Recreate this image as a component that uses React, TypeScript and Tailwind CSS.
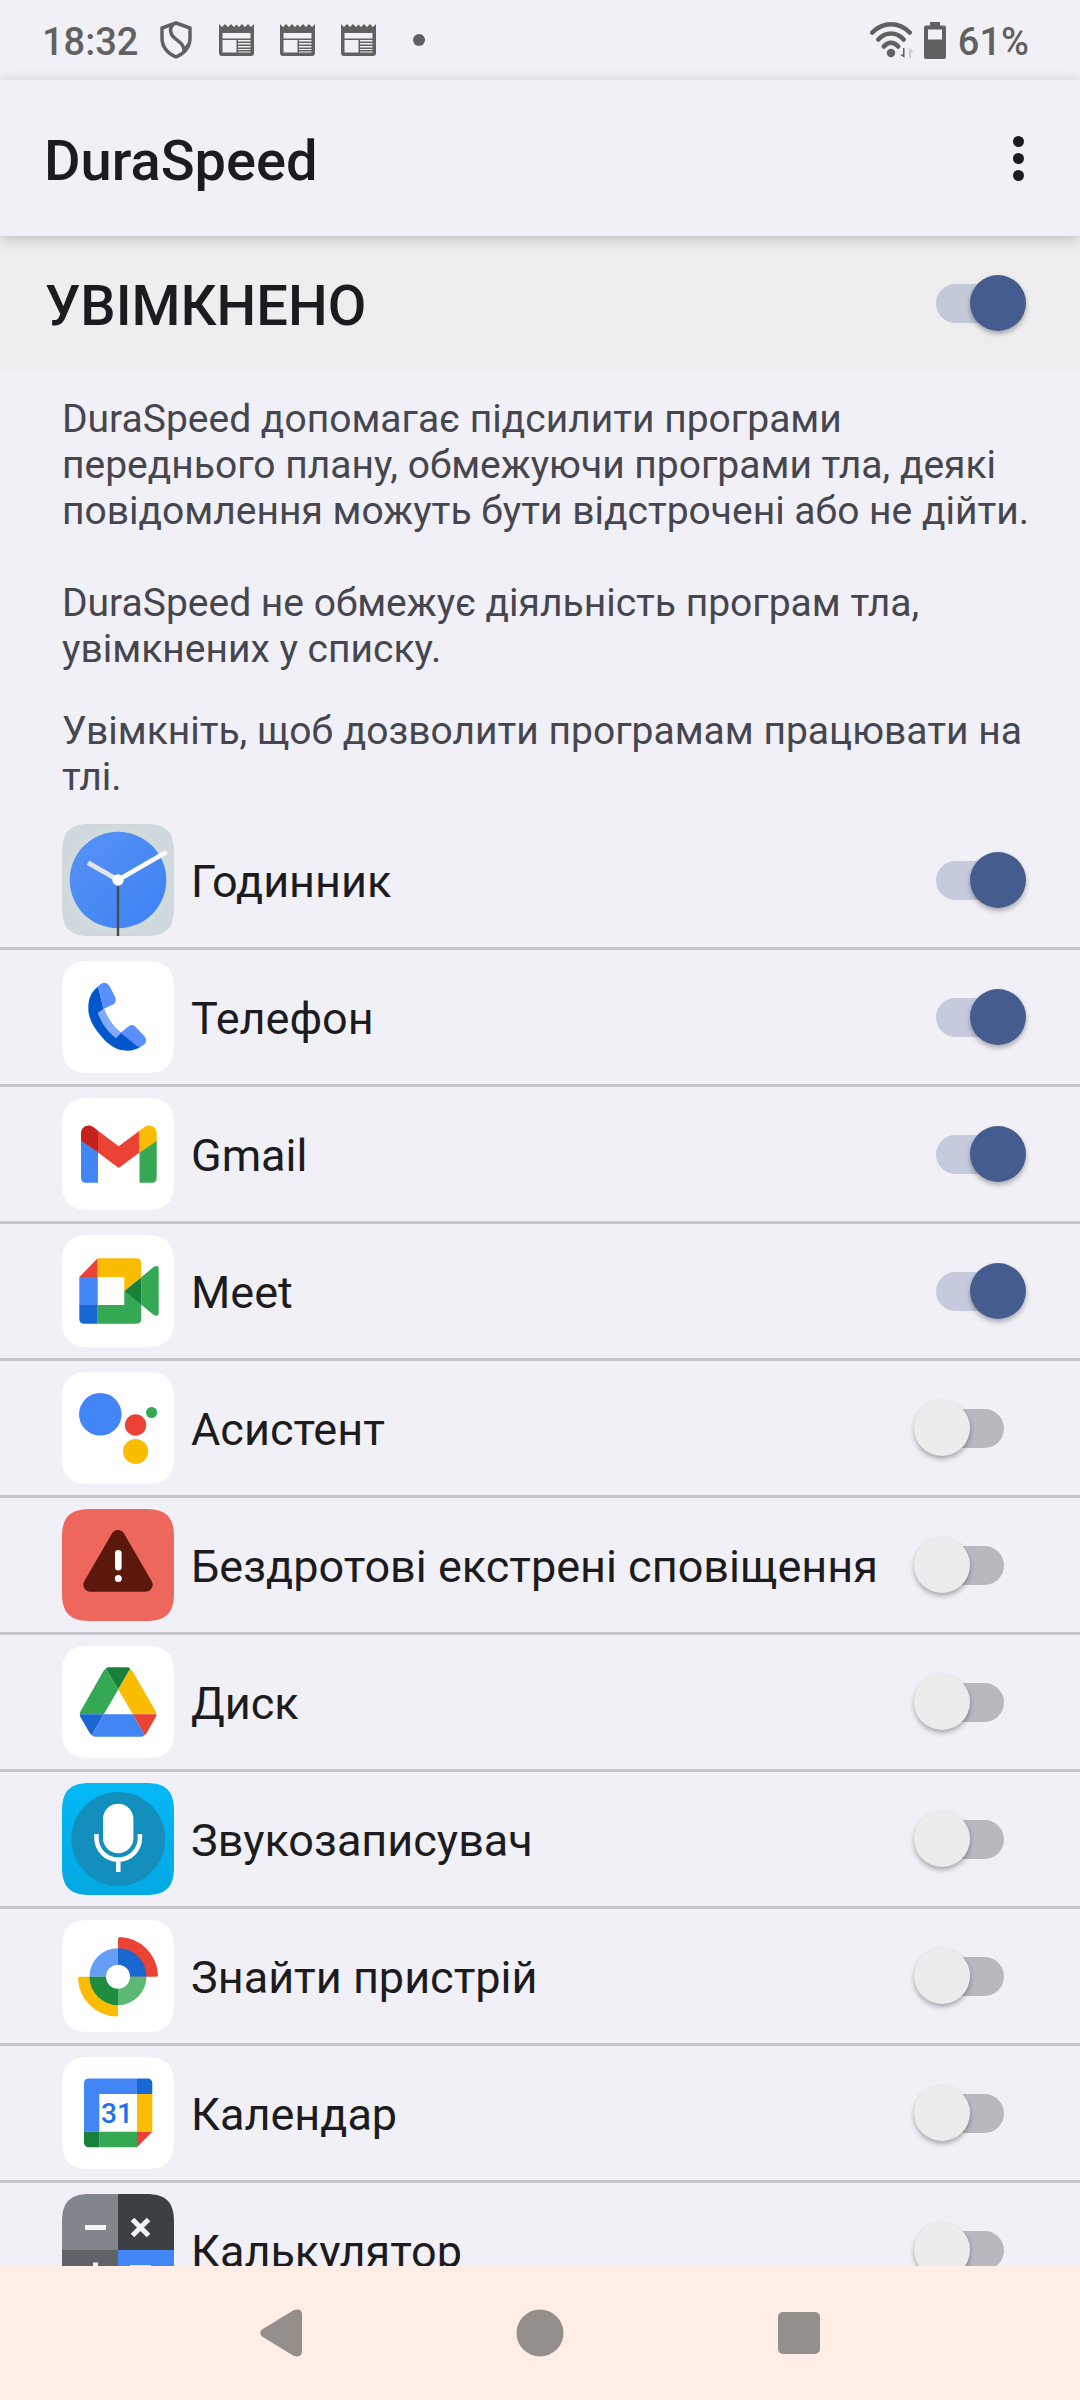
import { useId, useState, type ReactNode } from "react";

type AppItem = {
  name: string;
  enabled: boolean;
  icon: ReactNode;
};

/* App icons, all drawn on a 112 x 112 tile */

const ClockIcon = () => (
  <>
    <defs>
      <linearGradient id="clock-face" x1="0" y1="0" x2="1" y2="1">
        <stop offset="0" stopColor="#5894f7" />
        <stop offset="1" stopColor="#3c80f2" />
      </linearGradient>
    </defs>
    <rect width="112" height="112" fill="#cfd8dc" />
    <circle cx="56" cy="56" r="54" fill="#d2dbdc" />
    <circle cx="56" cy="56" r="48.3" fill="url(#clock-face)" />
    <path d="M56 56V112" stroke="#474b52" strokeWidth="2.4" />
    <path d="M56 56 26 38.6" stroke="#e3e4e6" strokeWidth="4.8" />
    <path d="M56 56 104.5 28" stroke="#fafafa" strokeWidth="4.8" />
    <circle cx="56" cy="56" r="5.7" fill="#fff" />
  </>
);

const PhoneIcon = () => (
  <>
    <rect width="112" height="112" fill="#fff" />
    <path
      d="M36 25.5C29 31 26.3 38 26.3 47C26.3 57 31 65.500 37 72.500C44.500 82.500 53.500 89.700 65.300 89.700C71 89.700 75 88.200 79 85.500L58.500 71.500C51 65.500 45.500 57.500 41.500 47.500Z"
      fill="#0057cc"
    />
    <path
      d="M35.700 51.700L42 47.500C45.500 57.500 51 65.500 59 72L54 77.300C45.500 70.500 39.500 62.500 35.700 51.700Z"
      fill="#83a9ff"
    />
    <path d="M36 25.500C40.500 20 45 21 47.500 25L53.300 36.500C54.500 39.500 53.500 42 51 43.400L41.500 48Z" fill="#5a8fff" />
    <path
      d="M58.500 71.700L67 65C69 63.600 71.300 63.800 73.200 65.500L82.300 75C86 79.500 83.500 84 78.500 85.600C77 86 76 85.500 74.700 84.800Z"
      fill="#5a8fff"
    />
  </>
);

const GmailIcon = () => (
  <>
    <rect width="112" height="112" fill="#fff" />
    <path d="M19 42.500 36 54.300V84.700H24Q19 84.700 19 79.700Z" fill="#4285f4" />
    <path d="M94.700 42.500 77.500 54.300V84.700H89.700Q94.700 84.700 94.700 79.700Z" fill="#34a853" />
    <path d="M36 32.700 56.700 48.300 77.500 32.700V54.500L56.700 70 36 54.500Z" fill="#ea4335" />
    <path d="M19 42.700V35.500C19 28.500 26.500 25 32 29.600L36 32.700V54.500Z" fill="#c5221f" />
    <path d="M94.700 42.700V35.500C94.700 28.500 87.200 25 81.700 29.600L77.500 32.700V54.500Z" fill="#fbbc04" />
  </>
);

const MeetIcon = () => (
  <>
    <rect width="112" height="112" fill="#fff" />
    <path d="M35.700 23.300V42H17.300Z" fill="#ea4335" />
    <path d="M35.700 23.300H74Q79.300 23.300 79.300 28.600V42L62.300 55.700V42H35.700Z" fill="#fbbc04" />
    <path d="M17.300 42H35.700V70H17.300Z" fill="#4285f4" />
    <path d="M17.300 70H35.700V88.700H22.300Q17.300 88.700 17.300 83.700Z" fill="#1967d2" />
    <path d="M35.700 70H62.300V55.700L79.300 69.500V83.400Q79.300 88.700 74 88.700H35.700Z" fill="#34a853" />
    <path d="M79.300 42.300 91.800 31.800Q96.700 29.500 96.700 34V77.500Q96.700 82.500 91.800 80L79.300 69.700Z" fill="#34a853" />
    <path d="M62.300 56 79.300 42.300V69.700Z" fill="#188038" />
  </>
);

const AssistantIcon = () => (
  <>
    <rect width="112" height="112" fill="#fff" />
    <circle cx="38.300" cy="42.300" r="21.300" fill="#4285f4" />
    <circle cx="73.600" cy="53" r="10.700" fill="#ea4335" />
    <circle cx="89.600" cy="40.500" r="5.500" fill="#34a853" />
    <circle cx="73.600" cy="79.400" r="12.500" fill="#fbbc04" />
  </>
);

const AlertIcon = () => (
  <>
    <rect width="112" height="112" fill="#ee675c" />
    <path
      d="M56 28 28.300 75.700H83.700Z"
      fill="#5c180d"
      stroke="#5c180d"
      strokeWidth="14"
      strokeLinejoin="round"
    />
    <rect x="53" y="41" width="6.600" height="20.500" rx="3.300" fill="#fff" />
    <circle cx="56.300" cy="69.600" r="3.500" fill="#fff" />
  </>
);

const DriveIcon = () => (
  <>
    <rect width="112" height="112" fill="#fff" />
    <path d="M43.700 22.700Q45 21.300 47 21.300H65Q67 21.300 68.200 22.700L56.200 43.500Z" fill="#188038" />
    <path d="M43.700 22.700Q42.300 23.500 41.300 25.200L18.700 65Q17.700 66.500 17.700 68.200H41.800L56.200 43.500Z" fill="#34a853" />
    <path d="M68.200 22.700Q69.500 23.500 70.500 25.200L93.500 65Q94.500 66.500 94.500 68.200H70.900L56.200 43.500Z" fill="#fbbc04" />
    <path d="M17.700 68.200Q17.700 69.700 18.700 71.500L27.700 87Q28.500 88.500 29.900 89.300L41.800 68.200Z" fill="#1967d2" />
    <path d="M41.800 68.200H70.900L82.700 89.300Q81.300 90.700 79.300 90.700H33Q31 90.700 29.900 89.300Z" fill="#4285f4" />
    <path d="M70.900 68.200H94.500Q94.500 69.700 93.500 71.500L84.700 87Q84 88.500 82.700 89.300Z" fill="#ea4335" />
  </>
);

const RecorderIcon = () => (
  <>
    <defs>
      <linearGradient id="recorder-tile" x1="0" y1="0" x2="0" y2="1">
        <stop offset="0" stopColor="#03b8f5" />
        <stop offset="1" stopColor="#03a9e3" />
      </linearGradient>
    </defs>
    <rect width="112" height="112" fill="url(#recorder-tile)" />
    <circle cx="56.300" cy="56" r="47" fill="#128fbc" />
    <rect x="41" y="20.700" width="30.400" height="49.600" rx="15.200" fill="#fff" />
    <path d="M34.500 51V55A21.700 21.700 0 0 0 77.900 55V51M56.300 77V89" fill="none" stroke="#fff" strokeWidth="4.500" />
  </>
);

const FindDeviceIcon = () => (
  <>
    <rect width="112" height="112" fill="#fff" />
    <path d="M56 56.700V19Q56 17 58 17A39.500 39.500 0 0 1 96 54.700Q96 56.700 94 56.700Z" fill="#ea4335" />
    <path d="M56 56.700V94.500Q56 96.500 54 96.500A39.500 39.500 0 0 1 16 58.700Q16 56.700 18 56.700Z" fill="#fbbc04" />
    <path d="M56 56.700H27.500A28.500 28.500 0 0 1 56 28.200Z" fill="#669df6" />
    <path d="M56 56.700V28.200A28.500 28.500 0 0 1 84.500 56.700Z" fill="#1967d2" />
    <path d="M56 56.700H84.500A28.500 28.500 0 0 1 56 85.200Z" fill="#5bb974" />
    <path d="M56 56.700V85.200A28.500 28.500 0 0 1 27.500 56.700Z" fill="#1e8e3e" />
    <circle cx="56" cy="56.700" r="12" fill="#fff" />
  </>
);

const CalendarIcon = () => (
  <>
    <rect width="112" height="112" fill="#fff" />
    <path d="M22 74.700V26.500Q22 21.500 27 21.500H75V37H37.300V74.700Z" fill="#4285f4" />
    <path d="M75 21.500H85.300Q90.300 21.500 90.300 26.500V37H75Z" fill="#1967d2" />
    <path d="M75 37H90.300V74.700H75Z" fill="#fbbc04" />
    <path d="M37.300 74.700H75V90.300H37.300Z" fill="#34a853" />
    <path d="M22 74.700H37.300V90.300H27Q22 90.300 22 85.300Z" fill="#188038" />
    <path d="M75 74.700H90.300L75 90.300Z" fill="#ea4335" />
    <text x="55" y="65.500" textAnchor="middle" className="fill-[#1a73e8] text-[28px] font-medium">
      31
    </text>
  </>
);

const CalculatorIcon = () => (
  <>
    <rect width="56" height="56" fill="#80868b" />
    <rect x="56" width="56" height="56" fill="#3c4043" />
    <rect y="56" width="56" height="56" fill="#5f6368" />
    <rect x="56" y="56" width="56" height="56" fill="#4285f4" />
    <path d="M23 33.500H44M70.500 25.500 86.500 41.500M86.500 25.500 70.500 41.500M23 79H44M33.500 68.500V89.500" stroke="#f5f5f5" strokeWidth="5" />
    <path d="M68 73.500H89M68 84.500H89" stroke="#d2e3fc" strokeWidth="5" />
  </>
);

const apps: AppItem[] = [
  { name: "Годинник", enabled: true, icon: <ClockIcon /> },
  { name: "Телефон", enabled: true, icon: <PhoneIcon /> },
  { name: "Gmail", enabled: true, icon: <GmailIcon /> },
  { name: "Meet", enabled: true, icon: <MeetIcon /> },
  { name: "Асистент", enabled: false, icon: <AssistantIcon /> },
  { name: "Бездротові екстрені сповіщення", enabled: false, icon: <AlertIcon /> },
  { name: "Диск", enabled: false, icon: <DriveIcon /> },
  { name: "Звукозаписувач", enabled: false, icon: <RecorderIcon /> },
  { name: "Знайти пристрій", enabled: false, icon: <FindDeviceIcon /> },
  { name: "Календар", enabled: false, icon: <CalendarIcon /> },
  { name: "Калькулятор", enabled: false, icon: <CalculatorIcon /> },
];

function AppTile({ children }: { children: ReactNode }) {
  const clip = useId();
  return (
    <svg viewBox="0 0 112 112" className="size-28 shrink-0" aria-hidden="true">
      <clipPath id={clip}>
        <path d="M28 0H84C104 0 112 8 112 28V84C112 104 104 112 84 112H28C8 112 0 104 0 84V28C0 8 8 0 28 0Z" />
      </clipPath>
      <g clipPath={`url(#${clip})`}>{children}</g>
    </svg>
  );
}

function Switch({ id, defaultOn }: { id: string; defaultOn: boolean }) {
  const [on, setOn] = useState(defaultOn);
  return (
    <span className="relative flex h-14 w-28 shrink-0 items-center px-[22px]">
      <input
        id={id}
        type="checkbox"
        role="switch"
        checked={on}
        onChange={() => setOn(!on)}
        className="peer absolute inset-0 z-10 cursor-pointer opacity-0"
      />
      <span className="h-[39px] flex-1 rounded-full bg-black/23 peer-checked:bg-[#455c8f]/25" />
      <span className="absolute top-0 left-0 size-14 rounded-full bg-[#ececec] shadow-[0_3px_5px_rgba(0,0,0,0.3)] peer-checked:right-0 peer-checked:left-auto peer-checked:bg-[#455c8f]" />
    </span>
  );
}

const NewsIcon = () => (
  <svg viewBox="0 0 35 32" className="h-8 w-[35px]" fill="currentColor" aria-hidden="true">
    <path
      fillRule="evenodd"
      d="M0 0 3 3 6 0 9 3 12 0 15 3 17.500 0.500 20 3 23 0 26 3 29 0 32 3 35 0V29Q35 32 32 32H3Q0 32 0 29ZM3.500 9V14.500H31.500V9ZM3.500 16V28.500H17.500V16ZM19 16V17.500H31.500V16ZM19 19V20.500H31.500V19ZM19 22V23.500H31.500V22ZM19 25V26H31.500V25ZM19 27.500V28.500H31.500V27.500Z"
    />
  </svg>
);

function StatusBar() {
  return (
    <div className="flex h-20 shrink-0 items-center justify-between pr-[51px] pl-[42px] text-[38px] font-medium text-[#616161]">
      <div className="flex items-center">
        <span className="pt-1">18:32</span>
        <svg viewBox="0 0 32 38" className="ml-[22px] h-[38px] w-8" fill="none" stroke="currentColor" strokeWidth="3.500" aria-hidden="true">
          <path d="M16 2 30 7V17C30 26 25 32 16 36C7 32 2 26 2 17V7Z" strokeLinejoin="round" />
          <path d="M13.500 3C9 7 10 13 14.500 17C19 21 23.500 22 24.500 31" />
          <path d="M29 21C28 26 26 29 24 31L25 26Z" fill="currentColor" strokeWidth="1" />
        </svg>
        <div className="ml-[27px] flex gap-[26px]">
          <NewsIcon />
          <NewsIcon />
          <NewsIcon />
        </div>
        <span className="ml-[37px] size-3 rounded-full bg-current" />
      </div>
      <div className="flex items-center">
        <svg viewBox="0 0 46 38" className="h-[38px] w-[46px]" fill="none" stroke="currentColor" strokeWidth="4.600" strokeLinecap="round" aria-hidden="true">
          <path d="M2.300 11.500C13 0.500 29 0.500 39.700 11.500" />
          <path d="M8.300 18.500C15.500 10.500 26.500 10.500 33.700 18.500" />
          <path d="M13.800 25.500C18 20.500 24 20.500 28.200 25.500" />
          <circle cx="21" cy="32" r="4.200" fill="currentColor" stroke="none" />
          <path d="M34.500 27V37L30 33.500H33V27Z" fill="currentColor" stroke="none" />
          <path d="M39 37V27L44.500 31H41V37Z" fill="#cbcbd0" stroke="none" />
        </svg>
        <svg viewBox="0 0 22 37" className="ml-2 h-[37px] w-[22px]" fill="currentColor" aria-hidden="true">
          <path fillRule="evenodd" d="M6 0H16V3.500H20Q22 3.500 22 5.500V35Q22 37 20 37H2Q0 37 0 35V5.500Q0 3.500 2 3.500H6ZM4 7.500V17.500H18V7.500Z" />
        </svg>
        <span className="ml-3 pt-1">61%</span>
      </div>
    </div>
  );
}

function NavigationBar() {
  return (
    <nav className="flex h-[134px] shrink-0 items-center justify-center gap-[211px] bg-[#ffede6] text-[#948f8b]">
      <button type="button" aria-label="Назад">
        <svg viewBox="0 0 48 48" className="size-12" fill="currentColor">
          <path d="M5 20.500 36.500 1.300Q45 -1.500 45 6V42Q45 49.500 36.500 46.700L5 27.500Q1.500 24 5 20.500Z" />
        </svg>
      </button>
      <button type="button" aria-label="Головний екран">
        <svg viewBox="0 0 48 48" className="size-12" fill="currentColor">
          <circle cx="24" cy="24" r="23.500" />
        </svg>
      </button>
      <button type="button" aria-label="Огляд">
        <svg viewBox="0 0 48 48" className="size-12" fill="currentColor">
          <rect x="3" y="3" width="42" height="42" rx="5" />
        </svg>
      </button>
    </nav>
  );
}

export default function App() {
  return (
    <div className="flex h-screen flex-col bg-[#f1f0f7] font-[Roboto,sans-serif] text-[#1b1b20]">
      <StatusBar />

      <header className="relative z-10 flex h-39 shrink-0 items-center justify-between bg-[#f1f0f7] pr-9 pl-11 shadow-[0_3px_14px_rgba(0,0,0,0.2)]">
        <h1 className="pt-1.5 text-[56px] font-medium">DuraSpeed</h1>
        <button type="button" aria-label="Інші опції" className="flex w-[51px] flex-col items-center gap-[6px]">
          <span className="size-[11px] rounded-full bg-current" />
          <span className="size-[11px] rounded-full bg-current" />
          <span className="size-[11px] rounded-full bg-current" />
        </button>
      </header>

      <main className="min-h-0 flex-1 overflow-y-auto [scrollbar-width:none]">
        <div className="flex h-[134px] items-center justify-between bg-[#eeeeee] pr-[54px] pl-[45px]">
          <label htmlFor="duraspeed" className="pt-1.5 text-[56px] font-medium">
            УВІМКНЕНО
          </label>
          <Switch id="duraspeed" defaultOn />
        </div>

        <div className="pt-[26px] pr-[45px] pb-[13px] pl-[62px] text-[39px] leading-[46px] text-[#45464f]">
          <p>
            DuraSpeed допомагає підсилити програми переднього плану, обмежуючи програми тла, деякі повідомлення можуть
            бути відстрочені або не дійти.
          </p>
          <p className="mt-[46px]">DuraSpeed не обмежує діяльність програм тла, увімкнених у списку.</p>
          <p className="mt-9">Увімкніть, щоб дозволити програмам працювати на тлі.</p>
        </div>

        <ul>
          {apps.map((app, index) => (
            <li
              key={app.name}
              className="flex items-center border-b-3 border-[#c5c5cc] py-[11px] pr-[54px] pl-[62px]"
            >
              <AppTile>{app.icon}</AppTile>
              <label htmlFor={`app-${index}`} className="ml-[17px] flex-1 pt-1 text-[45px]">
                {app.name}
              </label>
              <Switch id={`app-${index}`} defaultOn={app.enabled} />
            </li>
          ))}
        </ul>
      </main>

      <NavigationBar />
    </div>
  );
}
